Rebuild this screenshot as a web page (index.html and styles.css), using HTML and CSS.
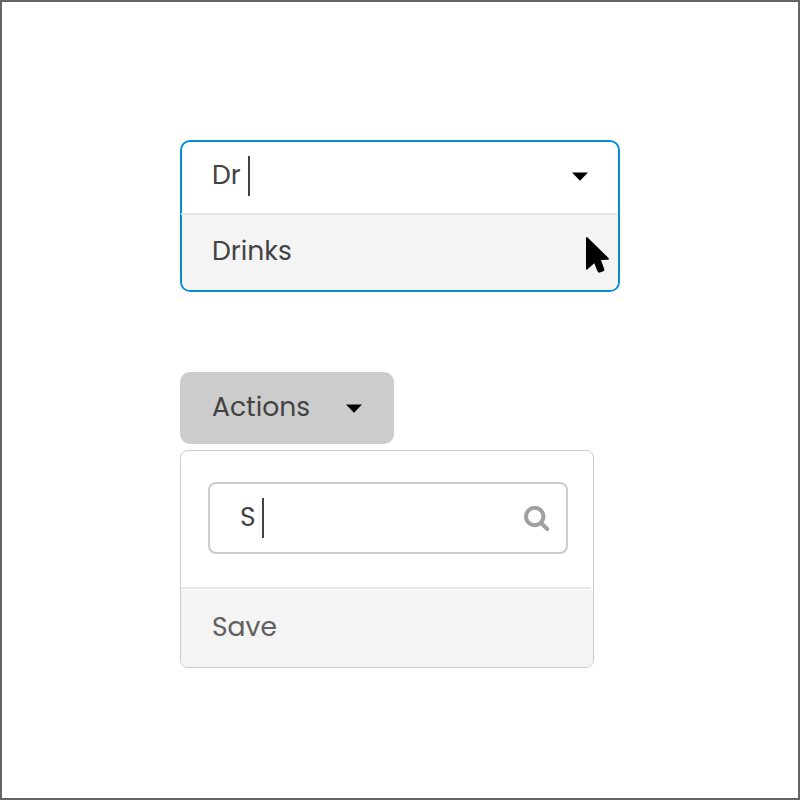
FILE: index.html
```html
<!DOCTYPE html>
<html lang="en">
<head>
<meta charset="utf-8">
<title>Dropdown filtering</title>
<link rel="stylesheet" href="styles.css">
</head>
<body>
<main class="frame">
  <section class="combo">
    <div class="combo-field">
      <span class="label dr">Dr</span><span class="text-caret"></span>
      <svg class="arrow" width="16" height="9" viewBox="0 0 16 9"><path d="M0 .4h16L8 8.8z"/></svg>
    </div>
    <div class="combo-option"><span class="label drinks">Drinks</span></div>
    <svg class="pointer" width="26" height="38" viewBox="0 0 26 38"><path d="M1 2.2Q1 0 2.6 1.5L23.3 21.8Q25 23.6 22.6 23.8L16 24.1L19.2 33Q19.8 34.7 18.3 35.3L14.7 36.6Q13.2 37.1 12.6 35.6L9.3 27.2L2.5 33.2Q1 34.5 1 32.5z"/></svg>
  </section>
  <div class="button">
    <span class="label actions">Actions</span>
    <svg class="arrow" width="16" height="9" viewBox="0 0 16 9"><path d="M0 .4h16L8 8.8z"/></svg>
  </div>
  <section class="panel">
    <div class="search">
      <span class="label s">S</span><span class="text-caret"></span>
      <svg class="lens" width="26" height="26" viewBox="0 0 26 26"><circle cx="10.7" cy="10.5" r="8.7"/><path d="M17 17l6.2 6"/></svg>
    </div>
    <div class="panel-option"><span class="label save">Save</span></div>
  </section>
</main>
</body>
</html>
```
FILE: styles.css
```css
* { box-sizing: border-box; }
body {
  margin: 0;
  background: #fff;
  color: #434343;
  font: 400 26.6px/36px Poppins, Inter, "Open Sans", sans-serif;
}
svg { display: block; }
.frame {
  width: 800px;
  height: 800px;
  border: 2px solid #666;
  padding: 138px 178px;
}
.combo {
  position: relative;
  width: 440px;
  height: 152px;
  border: 2px solid #068bd8;
  border-radius: 10px;
  background: #fff;
}
.combo-field {
  display: flex;
  align-items: center;
  height: 71px;
  padding: 0 30px 5px;
}
.combo-option {
  position: relative;
  height: 77px;
  padding: 20px 30px 0;
  background: #f4f4f4;
  border-radius: 0 0 8px 8px;
}
.combo-option::before {
  content: "";
  position: absolute;
  top: 0;
  left: -1px;
  width: 436px;
  height: 2px;
  background: #e6e6e6;
}
.label { display: block; white-space: nowrap; }
.dr { width: 36px; }
.text-caret { width: 2px; height: 40px; margin-top: 2px; background: #434343; }
.arrow { margin-left: auto; margin-top: 3px; fill: #000; }
.pointer { position: absolute; left: 403px; top: 94px; fill: #000; }
.button {
  display: flex;
  align-items: center;
  width: 214px;
  height: 72px;
  margin-top: 80px;
  padding: 0 32px 2px;
  border-radius: 10px;
  background: #ccc;
}
.panel {
  width: 414px;
  height: 218px;
  margin-top: 6px;
  padding-top: 31px;
  border: 1px solid #ccc;
  border-radius: 8px;
  background: #fff;
}
.search {
  display: flex;
  align-items: center;
  width: 360px;
  height: 72px;
  margin-left: 27px;
  padding: 0 16px 2px 30px;
  border: 2px solid #ccc;
  border-radius: 8px;
}
.s { width: 22px; }
.lens {
  margin-left: auto;
  margin-top: 4px;
  fill: none;
  stroke: #a0a0a0;
  stroke-width: 4;
  stroke-linecap: round;
}
.panel-option {
  position: relative;
  height: 77px;
  margin-top: 36px;
  padding: 19px 31px 0;
  background: #f4f4f4;
  border-radius: 0 0 7px 7px;
  color: #606060;
}
.panel-option::before {
  content: "";
  position: absolute;
  top: -3px;
  left: 0;
  width: 410px;
  height: 2px;
  background: #e6e6e6;
}
```
